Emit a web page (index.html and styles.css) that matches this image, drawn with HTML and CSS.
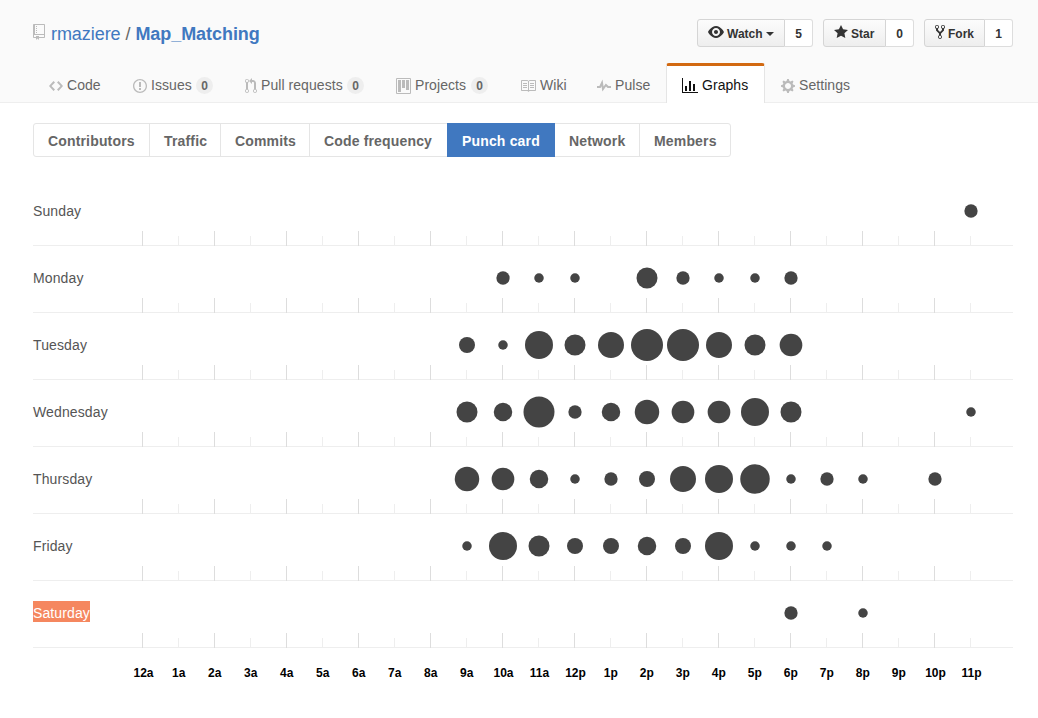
FILE: index.html
```html
<!DOCTYPE html>
<html lang="en">
<head>
<meta charset="utf-8">
<title>Punch card · rmaziere/Map_Matching</title>
<link rel="stylesheet" href="styles.css">
</head>
<body>
<header class="repohead">
  <div class="repohead-top">
    <h1 class="repo-title">
      <svg class="icon" width="12" height="16" viewBox="0 0 12 16"><path d="M4 9H3V8h1v1zm0-3H3v1h1V6zm0-2H3v1h1V4zm0-2H3v1h1V2zm8-1v12c0 .55-.45 1-1 1H6v2l-1.5-1.5L3 16v-2H1c-.55 0-1-.45-1-1V1c0-.55.45-1 1-1h10c.55 0 1 .45 1 1zm-1 10H1v2h2v-1h3v1h5v-2zm0-10H2v9h9V1z"/></svg>
      <span><a class="owner">rmaziere</a> <span class="slash">/</span> <a class="name">Map_Matching</a></span>
    </h1>
    <ul class="actions">
      <li class="action watch"><a class="btn"><svg width="16" height="16" viewBox="0 0 16 16"><path d="M8.06 2C3 2 0 8 0 8s3 6 8.06 6C13 14 16 8 16 8s-3-6-7.94-6zM8 12c-2.2 0-4-1.78-4-4 0-2.2 1.8-4 4-4 2.22 0 4 1.8 4 4 0 2.22-1.78 4-4 4zm2-4c0 1.11-.89 2-2 2-1.11 0-2-.89-2-2 0-1.11.89-2 2-2 1.11 0 2 .89 2 2z"/></svg><span>Watch</span><i class="caret"></i></a><a class="count">5</a></li>
      <li class="action star"><a class="btn"><svg width="14" height="16" viewBox="0 0 14 16"><path d="M14 6l-4.9-.64L7 1 4.9 5.36 0 6l3.6 3.26L2.67 14 7 11.67 11.33 14l-.93-4.74z"/></svg><span>Star</span></a><a class="count">0</a></li>
      <li class="action fork"><a class="btn"><svg width="10" height="16" viewBox="0 0 10 16"><path d="M8 1a1.993 1.993 0 0 0-1 3.72V6L5 8 3 6V4.72A1.993 1.993 0 0 0 2 1a1.993 1.993 0 0 0-1 3.72V6.5l3 3v1.78A1.993 1.993 0 0 0 5 15a1.993 1.993 0 0 0 1-3.72V9.5l3-3V4.72A1.993 1.993 0 0 0 8 1zM2 4.2C1.34 4.2.8 3.65.8 3c0-.65.55-1.2 1.2-1.2.65 0 1.2.55 1.2 1.2 0 .65-.55 1.2-1.2 1.2zm3 10c-.66 0-1.2-.55-1.2-1.2 0-.65.55-1.2 1.2-1.2.65 0 1.2.55 1.2 1.2 0 .65-.55 1.2-1.2 1.2zm3-10c-.66 0-1.2-.55-1.2-1.2 0-.65.55-1.2 1.2-1.2.65 0 1.2.55 1.2 1.2 0 .65-.55 1.2-1.2 1.2z"/></svg><span>Fork</span></a><a class="count">1</a></li>
    </ul>
  </div>
  <nav class="tabs">
    <a class="tab"><svg width="14" height="16" viewBox="0 0 14 16"><path d="M9.5 3L8 4.5 11.5 8 8 11.5 9.5 13 14 8 9.5 3zm-5 0L0 8l4.5 5L6 11.5 2.5 8 6 4.5 4.5 3z"/></svg><span>Code</span></a>
    <a class="tab"><svg width="14" height="16" viewBox="0 0 14 16"><path d="M7 2.3c3.14 0 5.7 2.56 5.7 5.7s-2.56 5.7-5.7 5.7A5.71 5.71 0 0 1 1.3 8c0-3.14 2.56-5.7 5.7-5.7zM7 1C3.14 1 0 4.14 0 8s3.14 7 7 7 7-3.14 7-7-3.14-7-7-7zm1 3H6v5h2V4zm0 6H6v2h2v-2z"/></svg><span>Issues</span><span class="counter">0</span></a>
    <a class="tab"><svg width="12" height="16" viewBox="0 0 12 16"><path d="M11 11.28V5c-.03-.78-.34-1.47-.94-2.06C9.46 2.35 8.78 2.03 8 2H7V0L4 3l3 3V4h1c.27.02.48.11.69.31.21.2.3.42.31.69v6.28A1.993 1.993 0 0 0 10 15a1.993 1.993 0 0 0 1-3.72zm-1 2.92c-.66 0-1.2-.55-1.2-1.2 0-.65.55-1.2 1.2-1.2.65 0 1.2.55 1.2 1.2 0 .65-.55 1.2-1.2 1.2zM4 3c0-1.11-.89-2-2-2a1.993 1.993 0 0 0-1 3.72v6.56A1.993 1.993 0 0 0 2 15a1.993 1.993 0 0 0 1-3.72V4.72c.59-.34 1-.98 1-1.72zm-.8 10c0 .66-.55 1.2-1.2 1.2-.65 0-1.2-.55-1.2-1.2 0-.65.55-1.2 1.2-1.2.65 0 1.2.55 1.2 1.2zM2 4.2C1.34 4.2.8 3.65.8 3c0-.65.55-1.2 1.2-1.2.65 0 1.2.55 1.2 1.2 0 .65-.55 1.2-1.2 1.2z"/></svg><span>Pull requests</span><span class="counter">0</span></a>
    <a class="tab"><svg width="15" height="16" viewBox="0 0 15 16"><path fill-rule="evenodd" d="M10 12h3V2h-3v10zm-4-2h3V2H6v8zm-4 4h3V2H2v12zm-1 1h13V1H1v14zM14 0H1a1 1 0 0 0-1 1v14a1 1 0 0 0 1 1h13a1 1 0 0 0 1-1V1a1 1 0 0 0-1-1z"/></svg><span>Projects</span><span class="counter">0</span></a>
    <a class="tab"><svg width="16" height="16" viewBox="0 0 16 16"><path d="M3 5h4v1H3V5zm0 3h4V7H3v1zm0 2h4V9H3v1zm11-5h-4v1h4V5zm0 2h-4v1h4V7zm0 2h-4v1h4V9zm2-6v9c0 .55-.45 1-1 1H9.5l-1 1-1-1H2c-.55 0-1-.45-1-1V3c0-.55.45-1 1-1h5.5l1 1 1-1H15c.55 0 1 .45 1 1zm-8 .5L7.5 3H2v9h6V3.5zm7-.5H9.5l-.5.5V12h6V3z"/></svg><span>Wiki</span></a>
    <a class="tab"><svg width="14" height="16" viewBox="0 0 14 16"><path d="M11.5 8L8.8 5.4 6.6 8.5 5.5 1.6 2.38 8H0v2h3.6l.9-1.8.9 5.4L9 8.5l1.6 1.5H14V8z"/></svg><span>Pulse</span></a>
    <a class="tab selected"><svg width="16" height="16" viewBox="0 0 16 16"><path d="M16 14v1H0V0h1v14h15zM5 13H3V8h2v5zm4 0H7V3h2v10zm4 0h-2V6h2v7z"/></svg><span>Graphs</span></a>
    <a class="tab"><svg width="14" height="16" viewBox="0 0 14 16"><path d="M14 8.77v-1.6l-1.94-.64-.45-1.09.88-1.84-1.13-1.13-1.81.91-1.09-.45-.69-1.92h-1.6l-.63 1.94-1.11.45-1.84-.88-1.13 1.13.91 1.81-.45 1.09L0 7.23v1.59l1.94.64.45 1.09-.88 1.84 1.13 1.13 1.81-.91 1.09.45.69 1.92h1.59l.63-1.94 1.11-.45 1.84.88 1.13-1.13-.92-1.81.47-1.09L14 8.75v.02zM7 11c-1.66 0-3-1.34-3-3s1.34-3 3-3 3 1.34 3 3-1.34 3-3 3z"/></svg><span>Settings</span></a>
  </nav>
</header>
<main class="content">
  <nav class="subnav">
    <a>Contributors</a><a>Traffic</a><a>Commits</a><a>Code frequency</a><a class="selected">Punch card</a><a>Network</a><a>Members</a>
  </nav>
  <section class="punchcard" id="punchcard"></section>
</main>
<script src="chart.js"></script>
</body>
</html>
```

FILE: styles.css
```css
* { box-sizing: border-box; }
body {
  margin: 0;
  background: #fff;
  color: #333;
  font: 14px/20px "Liberation Sans", Arial, sans-serif;
}
svg { display: block; flex: none; fill: currentColor; }

.repohead {
  display: flex;
  flex-direction: column;
  justify-content: space-between;
  height: 103px;
  padding: 19px 25px 0 33px;
  background: #fafafa;
  border-bottom: 1px solid #eee;
}
.repohead-top { display: flex; justify-content: space-between; }
.repo-title {
  display: flex;
  gap: 6px;
  margin: 0;
  padding-top: 1px;
  font-size: 18px;
  font-weight: 400;
  line-height: 29px;
  letter-spacing: -.06px;
  color: #4078c0;
}
.repo-title .icon { margin-top: 4px; color: #bbb; }
.slash { color: #666; }
.name { font-weight: 700; }

.actions { display: flex; gap: 10px; margin: 0; padding: 0; list-style: none; }
.action { display: flex; height: 28px; font-size: 12px; font-weight: 700; }
.watch { width: 116px; }
.star { width: 91px; }
.fork { width: 89px; }
.btn {
  display: flex;
  flex: 1;
  align-items: center;
  gap: 3px;
  padding-left: 10px;
  border: 1px solid #d5d5d5;
  border-radius: 3px 0 0 3px;
  background: linear-gradient(#fcfcfc, #eee);
}
.btn svg { margin-top: -2px; }
.btn span { padding-top: 1px; }
.caret { margin-top: 1px; border: 4px solid transparent; border-top-color: #333; border-bottom: 0; }
.count {
  width: 28px;
  border: 1px solid #ddd;
  border-left: 0;
  border-radius: 0 3px 3px 0;
  background: #fff;
  line-height: 28px;
  text-align: center;
}

.tabs {
  display: grid;
  grid-template-columns: 84px 112px 151px 124px 77px 85px 99px auto;
  justify-content: start;
  height: 40px;
  margin-bottom: -1px;
  color: #666;
  letter-spacing: .06px;
}
.tab {
  display: flex;
  gap: 4px;
  height: 40px;
  padding: 9px 15px 0;
  border: solid transparent;
  border-width: 3px 1px 0;
  border-radius: 3px 3px 0 0;
  white-space: nowrap;
}
.tab svg { margin-top: 3px; color: #bbb; }
.tab.selected { background: #fff; border-color: #d26911 #e5e5e5 transparent; color: #111; }
.tab.selected svg { color: inherit; }
.counter {
  height: 17px;
  margin: 2px 0 0 auto;
  padding: 0 5px;
  border-radius: 20px;
  background: #eee;
  font-size: 12px;
  font-weight: 700;
  line-height: 18px;
}

.content { padding: 20px 25px 0 33px; }
.subnav {
  display: grid;
  grid-template-columns: 116px 71px 89px 138px 107px 85px 92px;
  height: 34px;
  color: #666;
  font-weight: 700;
  letter-spacing: .16px;
}
.subnav a {
  margin-right: -1px;
  padding: 7px 0 0 14px;
  border: 1px solid #e5e5e5;
  line-height: 20px;
  white-space: nowrap;
}
.subnav a:first-child { border-radius: 3px 0 0 3px; }
.subnav a:last-child { margin-right: 0; border-radius: 0 3px 3px 0; }
.subnav .selected { z-index: 1; background: #4078c0; border-color: #4078c0; color: #fff; }

.punchcard { padding-top: 22px; }
.day, .hours { display: grid; grid-template-columns: 92px repeat(24, 36px); }
.day { height: 67px; border-bottom: 1px solid #eee; color: #555; }
.day-label {
  justify-self: start;
  align-self: start;
  height: 21px;
  margin-top: 20px;
  line-height: 25px;
  letter-spacing: .12px;
}
.day-label.highlight { background: #f5875f; color: #fff; }
.cell { height: 67px; }
.cell svg { width: 36px; height: 67px; }
.dot { fill: #444; }
.tick { fill: #eee; }
.tick.major { fill: #ddd; }
.hours { padding-top: 15px; color: #000; font-size: 12px; font-weight: 700; }
.hours span { padding-left: 1px; text-align: center; }
.hours .short { padding: 0 .5px 0 0; }
```

FILE: chart.js
```js
// Dot diameters in pixels, indexed by activity level.
const SIZES = [0, 9.5, 13.3, 16, 18.5, 21, 22.7, 24.5, 26, 28, 29.5, 31, 32];

// Activity level for each hour, from 12a to 11p.
const DAYS = {
  Sunday:    [0,0,0,0,0,0,0,0,0, 0,0,0,0,0,0,0,0,0,0,0,0,0,0,2],
  Monday:    [0,0,0,0,0,0,0,0,0, 0,2,1,1,0,5,2,1,1,2,0,0,0,0,0],
  Tuesday:   [0,0,0,0,0,0,0,0,0, 3,1,9,5,8,12,12,8,5,6,0,0,0,0,0],
  Wednesday: [0,0,0,0,0,0,0,0,0, 5,4,11,2,4,7,6,6,9,5,0,0,0,0,1],
  Thursday:  [0,0,0,0,0,0,0,0,0, 7,6,4,1,2,3,8,9,10,1,2,1,0,2,0],
  Friday:    [0,0,0,0,0,0,0,0,0, 1,9,5,3,3,4,3,9,1,1,1,0,0,0,0],
  Saturday:  [0,0,0,0,0,0,0,0,0, 0,0,0,0,0,0,0,0,0,2,0,1,0,0,0]
};

const rows = Object.entries(DAYS).map(([day, hours]) => {
  const cells = hours.map((level, hour) => {
    const major = hour % 2 === 0;
    const top = major ? 52 : 57;
    const dot = level ? `<circle class="dot" cx="18" cy="32" r="${SIZES[level] / 2}"/>` : '';
    return `<div class="cell"><svg viewBox="0 0 36 67">${dot}<rect class="tick${major ? ' major' : ''}" x="17" y="${top}" width="1" height="${(major ? 67 : 66) - top}"/></svg></div>`;
  }).join('');
  const highlight = day === 'Saturday' ? ' highlight' : '';
  return `<div class="day"><span class="day-label${highlight}">${day}</span>${cells}</div>`;
}).join('');

const labels = Array.from({ length: 24 }, (_, h) => {
  const hour = h % 12 || 12;
  return `<span${hour < 10 ? ' class="short"' : ''}>${hour}${h < 12 ? 'a' : 'p'}</span>`;
}).join('');

document.getElementById('punchcard').innerHTML =
  rows + `<div class="hours"><span></span>${labels}</div>`;
```
